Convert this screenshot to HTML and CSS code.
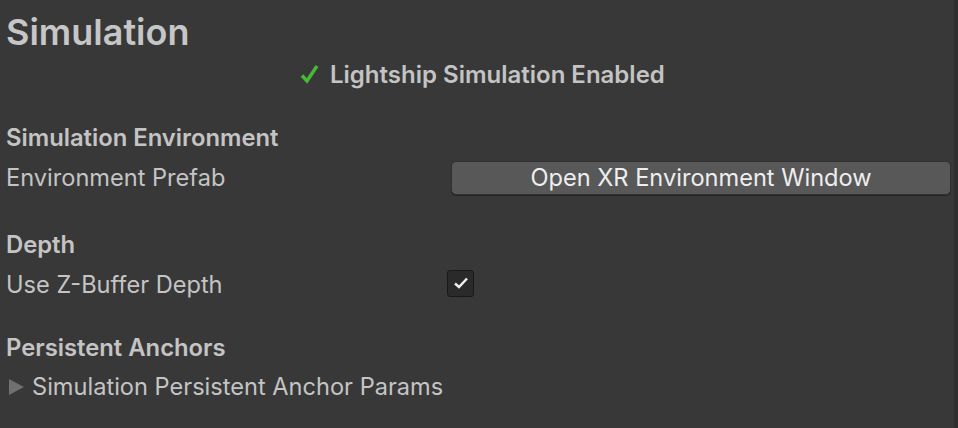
FILE: index.html
```html
<!DOCTYPE html>
<html>
<head>
<meta charset="utf-8">
<link rel="stylesheet" href="styles.css">
</head>
<body>
<div class="panel">
  <div class="inspector">
    <div class="title">Simulation</div>
    <div class="status">
      <svg class="ok" width="20" height="20" viewBox="0 0 20 20"><path d="M2 11.5 L7 17 L17 2" fill="none" stroke="#45bb33" stroke-width="3.4" stroke-linejoin="miter"/></svg>
      <span>Lightship Simulation Enabled</span>
    </div>

    <div class="header h-first">Simulation Environment</div>
    <div class="row">
      <div class="label">Environment Prefab</div>
      <div class="value"><button class="btn">Open XR Environment Window</button></div>
    </div>

    <div class="header h-mid">Depth</div>
    <div class="row">
      <div class="label">Use Z-Buffer Depth</div>
      <div class="value"><span class="checkbox"><svg width="18" height="18" viewBox="0 0 18 18"><path d="M3 9.5 L7 13 L15 4.5" fill="none" stroke="#f0f0f0" stroke-width="2.4"/></svg></span></div>
    </div>

    <div class="header h-last">Persistent Anchors</div>
    <div class="row foldout">
      <span class="tri"></span>
      <span class="label">Simulation Persistent Anchor Params</span>
    </div>
  </div>
  <div class="edge"></div>
</div>
</body>
</html>
```
FILE: styles.css
```css
html, body {
  margin: 0;
  padding: 0;
  background: #383838;
  width: 958px;
  height: 428px;
  overflow: hidden;
}
body {
  font-family: "Inter", "Noto Sans", sans-serif;
  color: #c4c4c4;
}
.panel {
  display: flex;
  height: 428px;
}
.inspector {
  flex: 1;
  padding: 0 3px 0 6px;
}
.edge {
  width: 4px;
  background: #2f2f2f;
}
.title {
  margin-top: 8px;
  height: 46px;
  line-height: 48px;
  font-size: 36px;
  font-weight: 600;
  color: #c6c6c6;
}
.status {
  margin-top: 0;
  height: 40px;
  display: flex;
  align-items: center;
  padding-left: 294px;
  gap: 10px;
  font-size: 24px;
  font-weight: 600;
}
.header {
  height: 40px;
  line-height: 41px;
  font-size: 23.8px;
  font-weight: 600;
}
.h-first { margin-top: 23px; }
.h-mid { margin-top: 27px; }
.h-last { margin-top: 23px; }
.row {
  height: 40px;
  display: grid;
  grid-template-columns: 445px 1fr;
  align-items: center;
  font-size: 23.6px;
}
.label {
  line-height: 42px;
  white-space: nowrap;
}
.value { display: flex; align-items: center; }
.btn {
  width: 100%;
  height: 34px;
  margin-left: 0;
  background: #585858;
  border: 1px solid #303030;
  border-radius: 5px;
  color: #eeeeee;
  font-family: "Inter", "Noto Sans", sans-serif;
  font-size: 23.6px;
  padding: 0;
  line-height: 32px;
  box-shadow: 0 1px 0 #242424;
}
.checkbox {
  margin-left: -4px;
  margin-top: -4px;
  width: 25px;
  height: 25px;
  background: #2a2a2a;
  border: 1px solid #191919;
  border-radius: 3px;
  display: flex;
  align-items: center;
  justify-content: center;
}
.foldout {
  display: flex;
  align-items: center;
}
.tri {
  width: 0;
  height: 0;
  border-top: 8px solid transparent;
  border-bottom: 8px solid transparent;
  border-left: 15px solid #707070;
  margin-left: 3px;
  margin-right: 8px;
}
```
